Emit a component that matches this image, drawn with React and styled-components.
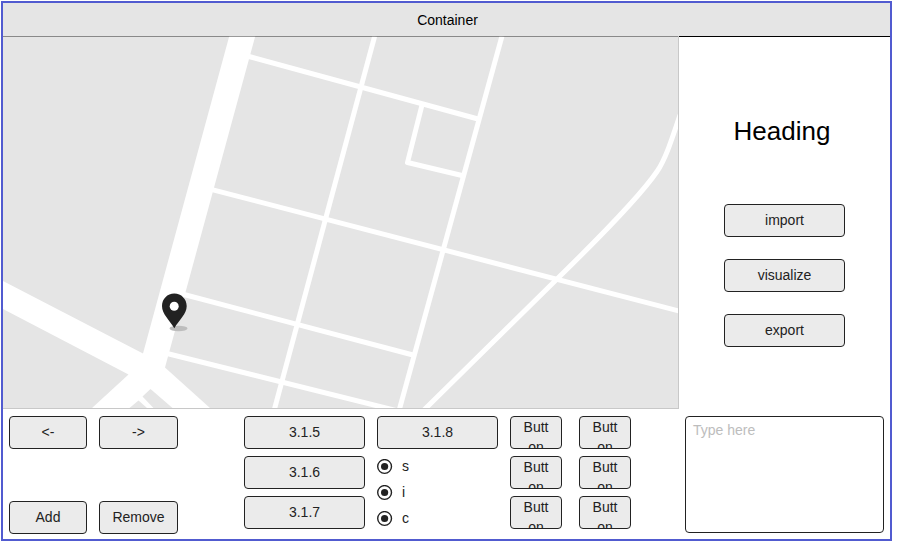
import React from "react";
import styled, { createGlobalStyle } from "styled-components";

const GlobalStyle = createGlobalStyle`
  * { box-sizing: border-box; }
  body {
    margin: 0;
    background: #fff;
    font-family: "Liberation Sans", Arial, sans-serif;
    font-size: 14px;
    line-height: 20px;
    color: #000;
  }
`;

const Frame = styled.div`
  width: 891px;
  height: 540px;
  margin: 1px;
  border: 2px solid #515bd0;
  display: grid;
  grid-template-rows: 33px 373px 1fr;
  background: #fff;
`;

const Header = styled.header`
  background: #e5e5e5;
  padding-top: 7px;
  padding-left: 2px;
  text-align: center;
`;

const Body = styled.main`
  display: grid;
  grid-template-columns: 676px 1fr;
`;

const MapPanel = styled.div`
  border-right: 1px solid #c8c8c8;
  border-bottom: 1px solid #c8c8c8;
  svg { display: block; }
`;

const Side = styled.aside`
  border-top: 1px solid #000;
  display: flex;
  flex-direction: column;
  align-items: center;
  gap: 22px;
`;

const Title = styled.h1`
  margin: 79px 5px 36px 0;
  font-size: 26px;
  line-height: 30px;
  font-weight: 400;
`;

const Button = styled.button`
  width: ${(p) => p.$w || 121}px;
  height: 33px;
  padding: 0 0 2px;
  border: 1px solid #222;
  border-radius: 4px;
  background: #ebebeb;
  color: #222;
  font: inherit;
  text-align: center;
`;

const SmallButton = styled(Button)`
  display: block;
  width: 52px;
  padding: 0 12px;
  overflow: hidden;
  word-break: break-all;
`;

const ClippedLabel = styled.span`
  display: block;
  height: 33px;
`;

const Footer = styled.footer`
  display: flex;
  padding: 7px 6px 0;
`;

const NavGrid = styled.div`
  display: grid;
  grid-template-columns: 78px 79px;
  column-gap: 12px;
  align-content: space-between;
  height: 118px;
  margin-right: 66px;
`;

const Stack = styled.div`
  display: flex;
  flex-direction: column;
  gap: 7px;
  margin-right: 12px;
`;

const SmallGrid = styled.div`
  display: grid;
  grid-template-columns: 52px 52px;
  column-gap: 17px;
  row-gap: 7px;
  align-content: start;
  margin-right: 54px;
`;

const Choices = styled.div`
  display: flex;
  flex-direction: column;
  gap: 6px;
`;

const Choice = styled.div`
  display: flex;
  gap: 9px;
  height: 20px;
  color: #222;
  svg { margin-top: 3px; }
`;

const Input = styled.textarea`
  width: 199px;
  height: 117px;
  padding: 3px 7px;
  border: 1px solid #222;
  border-radius: 4px;
  resize: none;
  font: inherit;
  background: #fff;
  &::placeholder { color: #bdbdbd; opacity: 1; }
`;

const StreetMap = () => (
  <svg width="675" height="372" viewBox="3 36 675 372">
    <rect x="3" y="36" width="675" height="372" fill="#e5e5e5" />
    <path
      fill="#fff"
      d="M229.3 36H255.3L165 367.5L210 408H172.5L150.5 389L142.5 396.5L153.5 408H147L138.5 400.5L129.5 408H92L128.5 374.5L3 309V281L143 353.5Z"
    />
    <g fill="none" stroke="#fff" strokeWidth="5">
      <path d="M249 56.5L478 119" />
      <path d="M374.7 36L274.5 409" />
      <path d="M502 36L399.5 409" />
      <path d="M422 105L407.5 162.5L463 175.7" strokeLinejoin="round" />
      <path d="M212 189.6L679 311" />
      <path d="M184 294.5L413 355" />
      <path d="M167 353.5L396 410.5" />
      <path d="M680 115C671 142 665 160 657 171.5C641 195 600 237 557 279L424 410" />
    </g>
    <path d="M3 36.5H678" stroke="#000" strokeOpacity="0.4" />
    <ellipse cx="178.5" cy="328.5" rx="9" ry="2.7" fill="#bdbdbd" />
    <path
      fill="#222"
      fillRule="evenodd"
      d="M174.3 293.5C167.3 293.5 162 299 162 306C162 314 169.5 320 174.3 328.2C179 320 186.7 314 186.7 306C186.7 299 181.3 293.5 174.3 293.5Z"
    />
    <circle cx="174.2" cy="306.2" r="4.5" fill="#fff" />
  </svg>
);

const RadioIcon = () => (
  <svg width="16" height="16" viewBox="0 0 16 16">
    <circle cx="7.6" cy="7.5" r="6.9" fill="#fff" stroke="#222" strokeWidth="1.4" />
    <circle cx="7.6" cy="7.5" r="3.6" fill="#222" />
  </svg>
);

export default function App() {
  return (
    <>
      <GlobalStyle />
      <Frame>
        <Header>Container</Header>
        <Body>
          <MapPanel><StreetMap /></MapPanel>
          <Side>
            <Title>Heading</Title>
            <Button>import</Button>
            <Button>visualize</Button>
            <Button>export</Button>
          </Side>
        </Body>
        <Footer>
          <NavGrid>
            <Button $w={78}>&lt;-</Button>
            <Button $w={79}>-&gt;</Button>
            <Button $w={78}>Add</Button>
            <Button $w={79}>Remove</Button>
          </NavGrid>
          <Stack>
            <Button>3.1.5</Button>
            <Button>3.1.6</Button>
            <Button>3.1.7</Button>
          </Stack>
          <Stack>
            <Button>3.1.8</Button>
            <Choices>
              {["s", "i", "c"].map((label) => (
                <Choice key={label}><RadioIcon />{label}</Choice>
              ))}
            </Choices>
          </Stack>
          <SmallGrid>
            {Array.from({ length: 6 }, (_, i) => (
              <SmallButton key={i}><ClippedLabel>Button</ClippedLabel></SmallButton>
            ))}
          </SmallGrid>
          <Input placeholder="Type here" />
        </Footer>
      </Frame>
    </>
  );
}
